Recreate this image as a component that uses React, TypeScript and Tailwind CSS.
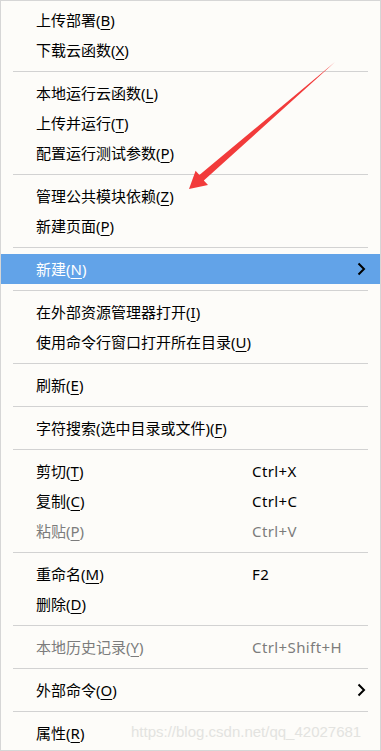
import React from "react";

type Item =
  | { sep: true }
  | {
      sep?: false;
      label: string;
      key: string;
      shortcut?: string;
      disabled?: boolean;
      active?: boolean;
      submenu?: boolean;
    };

const items: Item[] = [
  { label: "上传部署", key: "B" },
  { label: "下载云函数", key: "X" },
  { sep: true },
  { label: "本地运行云函数", key: "L" },
  { label: "上传并运行", key: "T" },
  { label: "配置运行测试参数", key: "P" },
  { sep: true },
  { label: "管理公共模块依赖", key: "Z" },
  { label: "新建页面", key: "P" },
  { sep: true },
  { label: "新建", key: "N", active: true, submenu: true },
  { sep: true },
  { label: "在外部资源管理器打开", key: "I" },
  { label: "使用命令行窗口打开所在目录", key: "U" },
  { sep: true },
  { label: "刷新", key: "E" },
  { sep: true },
  { label: "字符搜索(选中目录或文件)", key: "F" },
  { sep: true },
  { label: "剪切", key: "T", shortcut: "Ctrl+X" },
  { label: "复制", key: "C", shortcut: "Ctrl+C" },
  { label: "粘贴", key: "P", shortcut: "Ctrl+V", disabled: true },
  { sep: true },
  { label: "重命名", key: "M", shortcut: "F2" },
  { label: "删除", key: "D" },
  { sep: true },
  { label: "本地历史记录", key: "Y", shortcut: "Ctrl+Shift+H", disabled: true },
  { sep: true },
  { label: "外部命令", key: "O", submenu: true },
  { sep: true },
  { label: "属性", key: "R" },
];

function Chevron() {
  return (
    <svg width="9" height="14" viewBox="0 0 9 14" className="text-black">
      <path d="M1.5 1.5 L7 7 L1.5 12.5" fill="none" stroke="currentColor" strokeWidth="2" />
    </svg>
  );
}

export default function App() {
  return (
    <div
      className="relative w-[381px] h-[751px] overflow-hidden border border-[#d6d6d6] bg-[#fdfcf9] pt-[4px] text-[15px] leading-none"
      style={{ fontFamily: '"Noto Sans", "Noto Sans CJK SC", sans-serif' }}
    >
      {items.map((it, i) =>
        it.sep ? (
          <div key={i} className="py-[6px] mx-3">
            <div className="h-px bg-[#d2d2d2]" />
          </div>
        ) : (
          <div
            key={i}
            className={`flex items-center h-[30px] pl-[35px] pr-[14px] ${
              it.active ? "bg-[#62a3e8] text-white" : it.disabled ? "text-[#7c7c7c]" : "text-black"
            }`}
          >
            <span className="w-[216px] shrink-0 whitespace-nowrap">
              {it.label}(<span className="underline underline-offset-[3px]">{it.key}</span>)
            </span>
            <span className="flex-1 whitespace-nowrap tracking-[0.4px]">{it.shortcut}</span>
            {it.submenu && <Chevron />}
          </div>
        )
      )}

      {/* watermark */}
      <div
        className="absolute left-[130px] top-[723px] text-[15px] text-[#e3e3e0] whitespace-nowrap"
        style={{ fontFamily: '"Liberation Sans", Arial, sans-serif' }}
      >
        https://blog.csdn.net/qq_42027681
      </div>

      {/* red annotation arrow */}
      <svg className="absolute left-0 top-0 pointer-events-none" width="381" height="751" viewBox="0 0 381 751">
        <polygon
          points="334,61 202.8,179.6 207,184 188,188 194.6,169.8 198.4,174"
          fill="#f23b3b"
        />
      </svg>
    </div>
  );
}
